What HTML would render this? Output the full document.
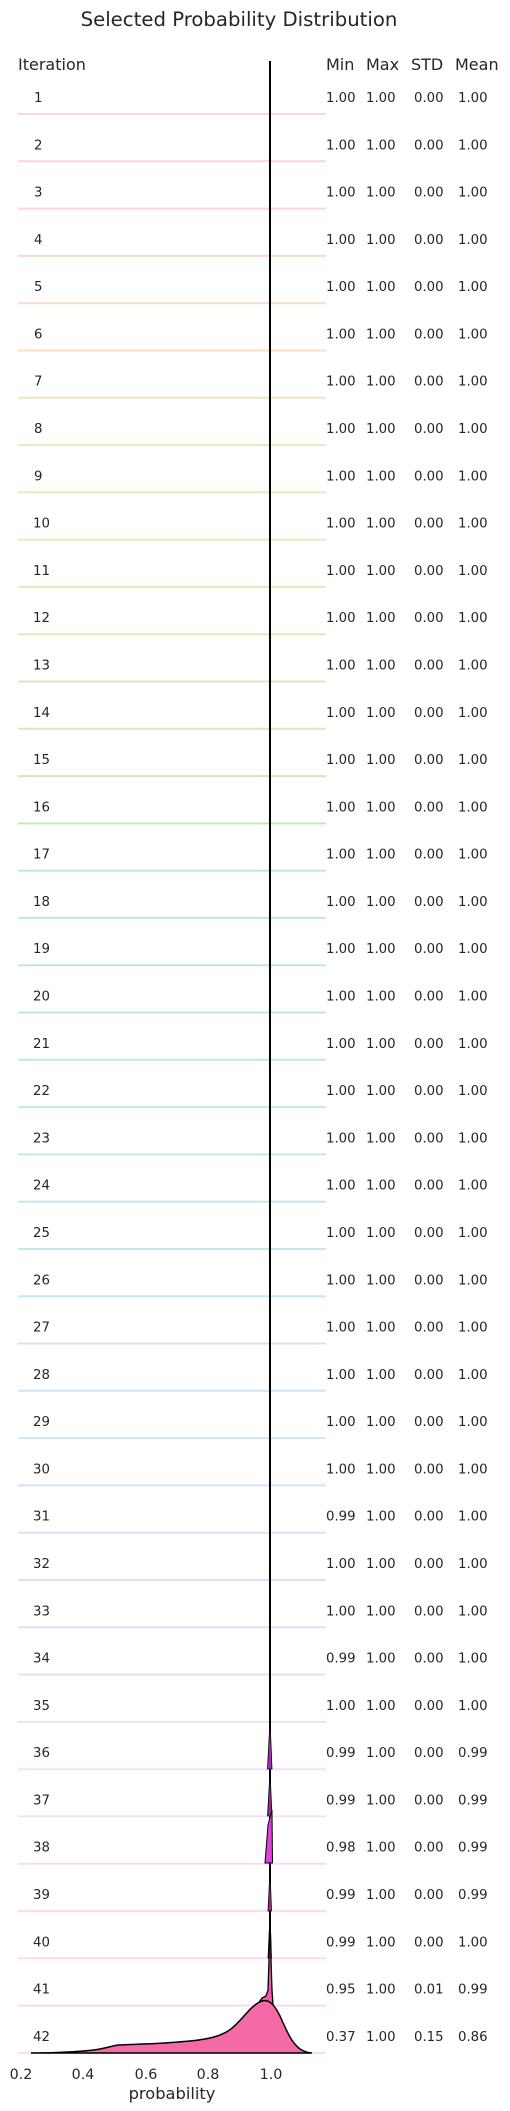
<!DOCTYPE html>
<html><head><meta charset="utf-8"><style>
html,body{margin:0;padding:0;background:#fff;width:510px;height:2111px;overflow:hidden}
svg{display:block}
text{font-family:"DejaVu Sans","Liberation Sans",sans-serif;fill:#262626}
.r text{font-size:13.3px}
</style></head><body>
<svg width="510" height="2111" viewBox="0 0 510 2111" xmlns="http://www.w3.org/2000/svg">
<text x="239" y="26" text-anchor="middle" style="font-size:19.7px">Selected Probability Distribution</text>
<text x="18" y="70" style="font-size:16px">Iteration</text>
<text x="326" y="70" style="font-size:16px">Min</text>
<text x="366" y="70" style="font-size:16px">Max</text>
<text x="411" y="70" style="font-size:16px">STD</text>
<text x="455" y="70" style="font-size:16px">Mean</text>

<g class="r">
<g transform="translate(0,114)"><line x1="18" x2="326" y1="0" y2="0" stroke="hsl(350,85%,92%)" stroke-width="2"/><text x="34" y="-12">1</text><text x="326" y="-12">1.00</text><text x="366" y="-12">1.00</text><text x="414" y="-12">0.00</text><text x="458" y="-12">1.00</text></g>
<g transform="translate(0,161.3)"><line x1="18" x2="326" y1="0" y2="0" stroke="hsl(358,85%,91%)" stroke-width="2"/><text x="34" y="-12">2</text><text x="326" y="-12">1.00</text><text x="366" y="-12">1.00</text><text x="414" y="-12">0.00</text><text x="458" y="-12">1.00</text></g>
<g transform="translate(0,208.6)"><line x1="18" x2="326" y1="0" y2="0" stroke="hsl(8,85%,90%)" stroke-width="2"/><text x="34" y="-12">3</text><text x="326" y="-12">1.00</text><text x="366" y="-12">1.00</text><text x="414" y="-12">0.00</text><text x="458" y="-12">1.00</text></g>
<g transform="translate(0,255.9)"><line x1="18" x2="326" y1="0" y2="0" stroke="hsl(18,85%,89%)" stroke-width="2"/><text x="34" y="-12">4</text><text x="326" y="-12">1.00</text><text x="366" y="-12">1.00</text><text x="414" y="-12">0.00</text><text x="458" y="-12">1.00</text></g>
<g transform="translate(0,303.2)"><line x1="18" x2="326" y1="0" y2="0" stroke="hsl(25,80%,88%)" stroke-width="2"/><text x="34" y="-12">5</text><text x="326" y="-12">1.00</text><text x="366" y="-12">1.00</text><text x="414" y="-12">0.00</text><text x="458" y="-12">1.00</text></g>
<g transform="translate(0,350.5)"><line x1="18" x2="326" y1="0" y2="0" stroke="hsl(32,75%,87%)" stroke-width="2"/><text x="34" y="-12">6</text><text x="326" y="-12">1.00</text><text x="366" y="-12">1.00</text><text x="414" y="-12">0.00</text><text x="458" y="-12">1.00</text></g>
<g transform="translate(0,397.7)"><line x1="18" x2="326" y1="0" y2="0" stroke="hsl(38,70%,86%)" stroke-width="2"/><text x="34" y="-12">7</text><text x="326" y="-12">1.00</text><text x="366" y="-12">1.00</text><text x="414" y="-12">0.00</text><text x="458" y="-12">1.00</text></g>
<g transform="translate(0,445)"><line x1="18" x2="326" y1="0" y2="0" stroke="hsl(44,65%,85%)" stroke-width="2"/><text x="34" y="-12">8</text><text x="326" y="-12">1.00</text><text x="366" y="-12">1.00</text><text x="414" y="-12">0.00</text><text x="458" y="-12">1.00</text></g>
<g transform="translate(0,492.3)"><line x1="18" x2="326" y1="0" y2="0" stroke="hsl(50,60%,84%)" stroke-width="2"/><text x="34" y="-12">9</text><text x="326" y="-12">1.00</text><text x="366" y="-12">1.00</text><text x="414" y="-12">0.00</text><text x="458" y="-12">1.00</text></g>
<g transform="translate(0,539.6)"><line x1="18" x2="326" y1="0" y2="0" stroke="hsl(56,55%,83%)" stroke-width="2"/><text x="33" y="-12">10</text><text x="326" y="-12">1.00</text><text x="366" y="-12">1.00</text><text x="414" y="-12">0.00</text><text x="458" y="-12">1.00</text></g>
<g transform="translate(0,586.9)"><line x1="18" x2="326" y1="0" y2="0" stroke="hsl(62,50%,82%)" stroke-width="2"/><text x="33" y="-12">11</text><text x="326" y="-12">1.00</text><text x="366" y="-12">1.00</text><text x="414" y="-12">0.00</text><text x="458" y="-12">1.00</text></g>
<g transform="translate(0,634.2)"><line x1="18" x2="326" y1="0" y2="0" stroke="hsl(68,50%,82%)" stroke-width="2"/><text x="33" y="-12">12</text><text x="326" y="-12">1.00</text><text x="366" y="-12">1.00</text><text x="414" y="-12">0.00</text><text x="458" y="-12">1.00</text></g>
<g transform="translate(0,681.5)"><line x1="18" x2="326" y1="0" y2="0" stroke="hsl(75,50%,82%)" stroke-width="2"/><text x="33" y="-12">13</text><text x="326" y="-12">1.00</text><text x="366" y="-12">1.00</text><text x="414" y="-12">0.00</text><text x="458" y="-12">1.00</text></g>
<g transform="translate(0,728.8)"><line x1="18" x2="326" y1="0" y2="0" stroke="hsl(82,50%,82%)" stroke-width="2"/><text x="33" y="-12">14</text><text x="326" y="-12">1.00</text><text x="366" y="-12">1.00</text><text x="414" y="-12">0.00</text><text x="458" y="-12">1.00</text></g>
<g transform="translate(0,776.1)"><line x1="18" x2="326" y1="0" y2="0" stroke="hsl(92,50%,82%)" stroke-width="2"/><text x="33" y="-12">15</text><text x="326" y="-12">1.00</text><text x="366" y="-12">1.00</text><text x="414" y="-12">0.00</text><text x="458" y="-12">1.00</text></g>
<g transform="translate(0,823.4)"><line x1="18" x2="326" y1="0" y2="0" stroke="hsl(110,50%,83%)" stroke-width="2"/><text x="33" y="-12">16</text><text x="326" y="-12">1.00</text><text x="366" y="-12">1.00</text><text x="414" y="-12">0.00</text><text x="458" y="-12">1.00</text></g>
<g transform="translate(0,870.6)"><line x1="18" x2="326" y1="0" y2="0" stroke="hsl(135,50%,83%)" stroke-width="2"/><text x="33" y="-12">17</text><text x="326" y="-12">1.00</text><text x="366" y="-12">1.00</text><text x="414" y="-12">0.00</text><text x="458" y="-12">1.00</text></g>
<g transform="translate(0,917.9)"><line x1="18" x2="326" y1="0" y2="0" stroke="hsl(150,50%,83%)" stroke-width="2"/><text x="33" y="-12">18</text><text x="326" y="-12">1.00</text><text x="366" y="-12">1.00</text><text x="414" y="-12">0.00</text><text x="458" y="-12">1.00</text></g>
<g transform="translate(0,965.2)"><line x1="18" x2="326" y1="0" y2="0" stroke="hsl(160,50%,83%)" stroke-width="2"/><text x="33" y="-12">19</text><text x="326" y="-12">1.00</text><text x="366" y="-12">1.00</text><text x="414" y="-12">0.00</text><text x="458" y="-12">1.00</text></g>
<g transform="translate(0,1012.5)"><line x1="18" x2="326" y1="0" y2="0" stroke="hsl(167,50%,83%)" stroke-width="2"/><text x="33" y="-12">20</text><text x="326" y="-12">1.00</text><text x="366" y="-12">1.00</text><text x="414" y="-12">0.00</text><text x="458" y="-12">1.00</text></g>
<g transform="translate(0,1059.8)"><line x1="18" x2="326" y1="0" y2="0" stroke="hsl(173,50%,83%)" stroke-width="2"/><text x="33" y="-12">21</text><text x="326" y="-12">1.00</text><text x="366" y="-12">1.00</text><text x="414" y="-12">0.00</text><text x="458" y="-12">1.00</text></g>
<g transform="translate(0,1107.1)"><line x1="18" x2="326" y1="0" y2="0" stroke="hsl(178,50%,83%)" stroke-width="2"/><text x="33" y="-12">22</text><text x="326" y="-12">1.00</text><text x="366" y="-12">1.00</text><text x="414" y="-12">0.00</text><text x="458" y="-12">1.00</text></g>
<g transform="translate(0,1154.4)"><line x1="18" x2="326" y1="0" y2="0" stroke="hsl(183,55%,84%)" stroke-width="2"/><text x="33" y="-12">23</text><text x="326" y="-12">1.00</text><text x="366" y="-12">1.00</text><text x="414" y="-12">0.00</text><text x="458" y="-12">1.00</text></g>
<g transform="translate(0,1201.7)"><line x1="18" x2="326" y1="0" y2="0" stroke="hsl(188,55%,85%)" stroke-width="2"/><text x="33" y="-12">24</text><text x="326" y="-12">1.00</text><text x="366" y="-12">1.00</text><text x="414" y="-12">0.00</text><text x="458" y="-12">1.00</text></g>
<g transform="translate(0,1249)"><line x1="18" x2="326" y1="0" y2="0" stroke="hsl(193,60%,86%)" stroke-width="2"/><text x="33" y="-12">25</text><text x="326" y="-12">1.00</text><text x="366" y="-12">1.00</text><text x="414" y="-12">0.00</text><text x="458" y="-12">1.00</text></g>
<g transform="translate(0,1296.3)"><line x1="18" x2="326" y1="0" y2="0" stroke="hsl(198,65%,87%)" stroke-width="2"/><text x="33" y="-12">26</text><text x="326" y="-12">1.00</text><text x="366" y="-12">1.00</text><text x="414" y="-12">0.00</text><text x="458" y="-12">1.00</text></g>
<g transform="translate(0,1343.5)"><line x1="18" x2="326" y1="0" y2="0" stroke="hsl(203,70%,88%)" stroke-width="2"/><text x="33" y="-12">27</text><text x="326" y="-12">1.00</text><text x="366" y="-12">1.00</text><text x="414" y="-12">0.00</text><text x="458" y="-12">1.00</text></g>
<g transform="translate(0,1390.8)"><line x1="18" x2="326" y1="0" y2="0" stroke="hsl(207,75%,89%)" stroke-width="2"/><text x="33" y="-12">28</text><text x="326" y="-12">1.00</text><text x="366" y="-12">1.00</text><text x="414" y="-12">0.00</text><text x="458" y="-12">1.00</text></g>
<g transform="translate(0,1438.1)"><line x1="18" x2="326" y1="0" y2="0" stroke="hsl(210,75%,90%)" stroke-width="2"/><text x="33" y="-12">29</text><text x="326" y="-12">1.00</text><text x="366" y="-12">1.00</text><text x="414" y="-12">0.00</text><text x="458" y="-12">1.00</text></g>
<g transform="translate(0,1485.4)"><line x1="18" x2="326" y1="0" y2="0" stroke="hsl(212,75%,90%)" stroke-width="2"/><text x="33" y="-12">30</text><text x="326" y="-12">1.00</text><text x="366" y="-12">1.00</text><text x="414" y="-12">0.00</text><text x="458" y="-12">1.00</text></g>
<g transform="translate(0,1532.7)"><line x1="18" x2="326" y1="0" y2="0" stroke="hsl(215,80%,91%)" stroke-width="2"/><text x="33" y="-12">31</text><text x="326" y="-12">0.99</text><text x="366" y="-12">1.00</text><text x="414" y="-12">0.00</text><text x="458" y="-12">1.00</text></g>
<g transform="translate(0,1580)"><line x1="18" x2="326" y1="0" y2="0" stroke="hsl(225,80%,92%)" stroke-width="2"/><text x="33" y="-12">32</text><text x="326" y="-12">1.00</text><text x="366" y="-12">1.00</text><text x="414" y="-12">0.00</text><text x="458" y="-12">1.00</text></g>
<g transform="translate(0,1627.3)"><line x1="18" x2="326" y1="0" y2="0" stroke="hsl(235,80%,93%)" stroke-width="2"/><text x="33" y="-12">33</text><text x="326" y="-12">1.00</text><text x="366" y="-12">1.00</text><text x="414" y="-12">0.00</text><text x="458" y="-12">1.00</text></g>
<g transform="translate(0,1674.6)"><line x1="18" x2="326" y1="0" y2="0" stroke="hsl(250,80%,93%)" stroke-width="2"/><text x="33" y="-12">34</text><text x="326" y="-12">0.99</text><text x="366" y="-12">1.00</text><text x="414" y="-12">0.00</text><text x="458" y="-12">1.00</text></g>
<g transform="translate(0,1721.9)"><line x1="18" x2="326" y1="0" y2="0" stroke="hsl(265,80%,93%)" stroke-width="2"/><text x="33" y="-12">35</text><text x="326" y="-12">1.00</text><text x="366" y="-12">1.00</text><text x="414" y="-12">0.00</text><text x="458" y="-12">1.00</text></g>
<g transform="translate(0,1769.2)"><line x1="18" x2="326" y1="0" y2="0" stroke="hsl(280,80%,93%)" stroke-width="2"/><text x="33" y="-12">36</text><text x="326" y="-12">0.99</text><text x="366" y="-12">1.00</text><text x="414" y="-12">0.00</text><text x="458" y="-12">0.99</text></g>
<g transform="translate(0,1816.4)"><line x1="18" x2="326" y1="0" y2="0" stroke="hsl(290,80%,93%)" stroke-width="2"/><text x="33" y="-12">37</text><text x="326" y="-12">0.99</text><text x="366" y="-12">1.00</text><text x="414" y="-12">0.00</text><text x="458" y="-12">0.99</text></g>
<g transform="translate(0,1863.7)"><line x1="18" x2="326" y1="0" y2="0" stroke="hsl(300,80%,92%)" stroke-width="2"/><text x="33" y="-12">38</text><text x="326" y="-12">0.98</text><text x="366" y="-12">1.00</text><text x="414" y="-12">0.00</text><text x="458" y="-12">0.99</text></g>
<g transform="translate(0,1911)"><line x1="18" x2="326" y1="0" y2="0" stroke="hsl(310,80%,92%)" stroke-width="2"/><text x="33" y="-12">39</text><text x="326" y="-12">0.99</text><text x="366" y="-12">1.00</text><text x="414" y="-12">0.00</text><text x="458" y="-12">0.99</text></g>
<g transform="translate(0,1958.3)"><line x1="18" x2="326" y1="0" y2="0" stroke="hsl(318,80%,92%)" stroke-width="2"/><text x="33" y="-12">40</text><text x="326" y="-12">0.99</text><text x="366" y="-12">1.00</text><text x="414" y="-12">0.00</text><text x="458" y="-12">1.00</text></g>
<g transform="translate(0,2005.6)"><line x1="18" x2="326" y1="0" y2="0" stroke="hsl(324,80%,92%)" stroke-width="2"/><text x="33" y="-12">41</text><text x="326" y="-12">0.95</text><text x="366" y="-12">1.00</text><text x="414" y="-12">0.01</text><text x="458" y="-12">0.99</text></g>
<g transform="translate(0,2052.9)"><line x1="18" x2="326" y1="0" y2="0" stroke="hsl(330,80%,92%)" stroke-width="2"/><text x="33" y="-12">42</text><text x="326" y="-12">0.37</text><text x="366" y="-12">1.00</text><text x="414" y="-12">0.15</text><text x="458" y="-12">0.86</text></g>
</g>

<line x1="270" x2="270" y1="61" y2="2053" stroke="#000" stroke-width="2"/>
<path d="M267.5,1769 L270,1720 L272,1769 Z" fill="#a030b0" stroke="#000" stroke-width="0.8"/>
<path d="M267.5,1816 L270,1772 L272,1816 Z" fill="#903090" stroke="#000" stroke-width="0.8"/>
<path d="M265,1863 L268,1825 L272,1810 L272.5,1863 Z" fill="#e040e0" stroke="#000" stroke-width="1"/>
<path d="M268,1911 L270,1870 L271.5,1911 Z" fill="#a03080" stroke="#000" stroke-width="0.8"/>
<path d="M268,1958 L270,1915 L271.5,1958 Z" fill="#a03080" stroke="#000" stroke-width="0.8"/>
<path d="M257,2005 L262,1998 L266,1996 L268,1990 L269,1960 L270,1915 L271,1960 L272,1990 L273,2005 Z" fill="#ee5aa8" stroke="#000" stroke-width="1.3"/>
<path d="M31,2053 C60,2053 90,2051 100,2049 C110,2047 112,2046 118,2045 C140,2044 160,2044 190,2041 C210,2039 220,2036 228,2031 C240,2024 250,2005 262,2001 C270,1999 275,2006 280,2016 C288,2034 292,2043 300,2049 C305,2052 308,2053 312,2053 Z" fill="#f46aa6" stroke="#000" stroke-width="1.5"/>

<g style="font-size:14.3px" text-anchor="middle">
<text x="21" y="2079">0.2</text>
<text x="83" y="2079">0.4</text>
<text x="146" y="2079">0.6</text>
<text x="208" y="2079">0.8</text>
<text x="271" y="2079">1.0</text>
</g>
<text x="172" y="2099" text-anchor="middle" style="font-size:16.3px">probability</text>
</svg>
</body></html>
